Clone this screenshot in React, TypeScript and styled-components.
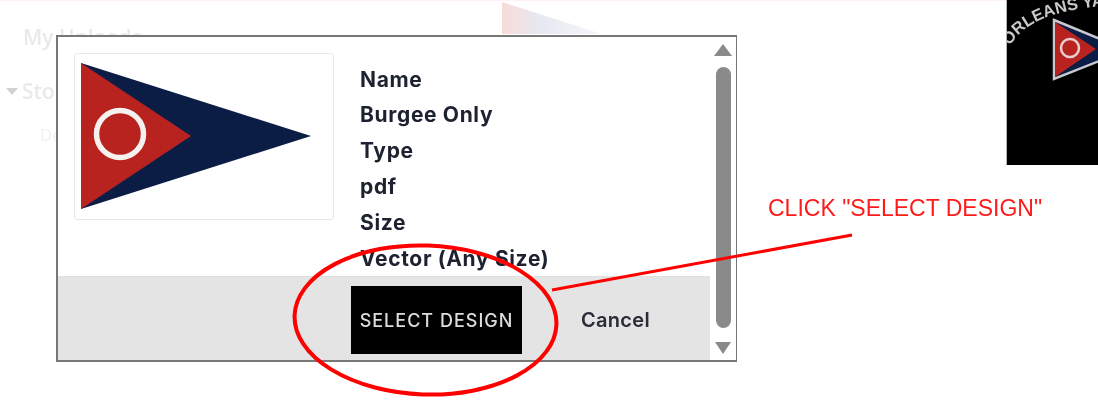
import React from 'react'
import styled, { createGlobalStyle } from 'styled-components'

const GlobalStyle = createGlobalStyle`
  html, body {
    margin: 0;
    background: #fff;
  }
`

const details = ['Name', 'Burgee Only', 'Type', 'pdf', 'Size', 'Vector (Any Size)']

const Burgee = () => (
  <BurgeeSvg viewBox="0 0 230 146">
    <polygon points="0,0 230,73 0,146" fill="#0c1d45" />
    <polygon points="0,0 110,73 0,146" fill="#b9231f" />
    <circle cx="39" cy="71" r="23.5" fill="none" stroke="#f6f1ee" strokeWidth="5.5" />
  </BurgeeSvg>
)

const Thumbnail = () => (
  <ThumbSvg viewBox="0 0 92 165">
    <defs>
      <path id="thumb-arc" d="M3 46 C 16 24, 42 9, 110 5" />
    </defs>
    <text fontFamily="'Liberation Sans', sans-serif" fontSize="16.5" fontWeight="700" fill="#c8c8c8">
      <textPath href="#thumb-arc">ORLEANS YA</textPath>
    </text>
    <polygon points="47,20 120,50 47,79" fill="#0c1d45" stroke="#c8c8d0" strokeWidth="2.5" />
    <polygon points="48,22 89,49 48,77" fill="#b9231f" />
    <circle cx="63" cy="48" r="9" fill="none" stroke="#e6cfcf" strokeWidth="2.5" />
  </ThumbSvg>
)

export default function App() {
  return (
    <Page>
      <GlobalStyle />
      <Backdrop>
        <TopLine />
        <FaintFlag viewBox="0 0 100 32">
          <polygon points="0,0 100,32 0,32" fill="url(#faint)" />
          <defs>
            <linearGradient id="faint" x1="0" x2="1" y1="0" y2="0">
              <stop offset="0" stopColor="#f8dcd8" />
              <stop offset="0.4" stopColor="#e6e9f1" />
              <stop offset="1" stopColor="#f6f7fa" />
            </linearGradient>
          </defs>
        </FaintFlag>
        <FaintHeading>My Uploads</FaintHeading>
        <FaintTree>
          <Caret />
          Store
        </FaintTree>
        <FaintLeaf>Designs</FaintLeaf>
        <Thumbnail />
      </Backdrop>

      <Modal>
        <ModalBody>
          <Content>
            <PreviewCard>
              <Burgee />
            </PreviewCard>
            <DetailList>
              {details.map((d) => (
                <DetailRow key={d}>{d}</DetailRow>
              ))}
            </DetailList>
          </Content>
          <Footer>
            <SelectButton>SELECT DESIGN</SelectButton>
            <CancelButton>Cancel</CancelButton>
          </Footer>
        </ModalBody>
        <Scrollbar>
          <ArrowUp />
          <Thumb />
          <ArrowDown />
        </Scrollbar>
      </Modal>

      <Annotation viewBox="0 0 1098 412">
        <ellipse cx="425.5" cy="321" rx="131" ry="74.5" fill="none" stroke="#ff0000" strokeWidth="4" transform="rotate(2 425.5 321)" />
        <line x1="552" y1="291" x2="852" y2="236" stroke="#ff0000" strokeWidth="3" />
      </Annotation>
      <AnnotationLabel>CLICK "SELECT DESIGN"</AnnotationLabel>
    </Page>
  )
}

const Page = styled.div`
  position: relative;
  box-sizing: border-box;
  width: 1098px;
  height: 412px;
  padding: 35px 0 0 56px;
  overflow: hidden;
  background: #fff;
  filter: blur(0.4px);
`

const Backdrop = styled.div`
  position: absolute;
  inset: 0;
  font-family: 'Open Sans', sans-serif;
  color: #e9e9e9;
`

const TopLine = styled.div`
  height: 1px;
  background: #fdf1f3;
`

const FaintFlag = styled.svg`
  position: absolute;
  left: 502px;
  top: 2px;
  width: 100px;
  height: 32px;
`

const FaintHeading = styled.div`
  position: absolute;
  left: 23px;
  top: 23px;
  font-size: 21px;
  font-weight: 600;
`

const FaintTree = styled.div`
  position: absolute;
  left: 6px;
  top: 77px;
  display: flex;
  align-items: center;
  gap: 4px;
  font-size: 21px;
  font-weight: 600;
`

const Caret = styled.span`
  width: 0;
  height: 0;
  border-left: 6px solid transparent;
  border-right: 6px solid transparent;
  border-top: 7px solid #d2d2d2;
`

const FaintLeaf = styled.div`
  position: absolute;
  left: 40px;
  top: 123px;
  font-size: 17px;
  color: #f1f1f1;
`

const ThumbSvg = styled.svg`
  position: absolute;
  left: 1006px;
  top: 0;
  width: 92px;
  height: 165px;
  background: #000;
  border-left: 1px solid #b5b5b5;
`

const Modal = styled.div`
  position: relative;
  box-sizing: border-box;
  display: flex;
  width: 681px;
  height: 327px;
  background: #fff;
  border: 2px solid #777;
  border-width: 2px 1.5px 2px 2px;
`

const ModalBody = styled.div`
  display: flex;
  flex-direction: column;
  width: 652px;
`

const Content = styled.div`
  flex: 1;
  display: flex;
  align-items: flex-start;
  padding: 16px 0 0 16px;
`

const PreviewCard = styled.div`
  box-sizing: border-box;
  width: 260px;
  height: 167px;
  padding: 9px 6px;
  border: 1.5px solid #e8e8e8;
  border-radius: 3px;
`

const BurgeeSvg = styled.svg`
  display: block;
  width: 230px;
  height: 146px;
`

const DetailList = styled.div`
  display: flex;
  flex-direction: column;
  margin: 8.6px 0 0 26px;
`

const DetailRow = styled.div`
  font-family: Inter, sans-serif;
  font-size: 21px;
  font-weight: 700;
  letter-spacing: 0.65px;
  line-height: 35.8px;
  color: #1d2230;
  white-space: nowrap;
`

const Footer = styled.div`
  box-sizing: border-box;
  display: flex;
  align-items: center;
  height: 84px;
  padding: 3px 0 0 293px;
  background: #e4e4e4;
  border-top: 1px solid #e0e0e0;
`

const SelectButton = styled.button`
  width: 171px;
  height: 68px;
  padding: 0;
  border: 0;
  background: #000;
  color: #dcdcdc;
  font-family: Inter, sans-serif;
  font-size: 18px;
  font-weight: 500;
  letter-spacing: 1px;
`

const CancelButton = styled.button`
  margin-left: 59px;
  padding: 0;
  border: 0;
  background: none;
  color: #2a2d38;
  font-family: Inter, sans-serif;
  font-size: 20px;
  font-weight: 600;
  letter-spacing: 0.3px;
`

const Scrollbar = styled.div`
  flex: 1;
  display: flex;
  flex-direction: column;
  align-items: center;
  padding: 7px 0 6px;
`

const ArrowUp = styled.span`
  width: 0;
  height: 0;
  margin-bottom: 11px;
  border-left: 9px solid transparent;
  border-right: 9px solid transparent;
  border-bottom: 12px solid #8a8a8a;
`

const ArrowDown = styled.span`
  width: 0;
  height: 0;
  margin-top: 14px;
  border-left: 8px solid transparent;
  border-right: 8px solid transparent;
  border-top: 12px solid #8a8a8a;
`

const Thumb = styled.div`
  width: 15px;
  height: 261px;
  border-radius: 8px;
  background: #8a8a8a;
`

const Annotation = styled.svg`
  position: absolute;
  left: 0;
  top: -1px;
  width: 1098px;
  height: 412px;
  pointer-events: none;
`

const AnnotationLabel = styled.div`
  position: absolute;
  left: 768px;
  top: 195px;
  font-family: 'Liberation Sans', sans-serif;
  font-size: 23px;
  color: #ff1a1a;
  white-space: nowrap;
`
